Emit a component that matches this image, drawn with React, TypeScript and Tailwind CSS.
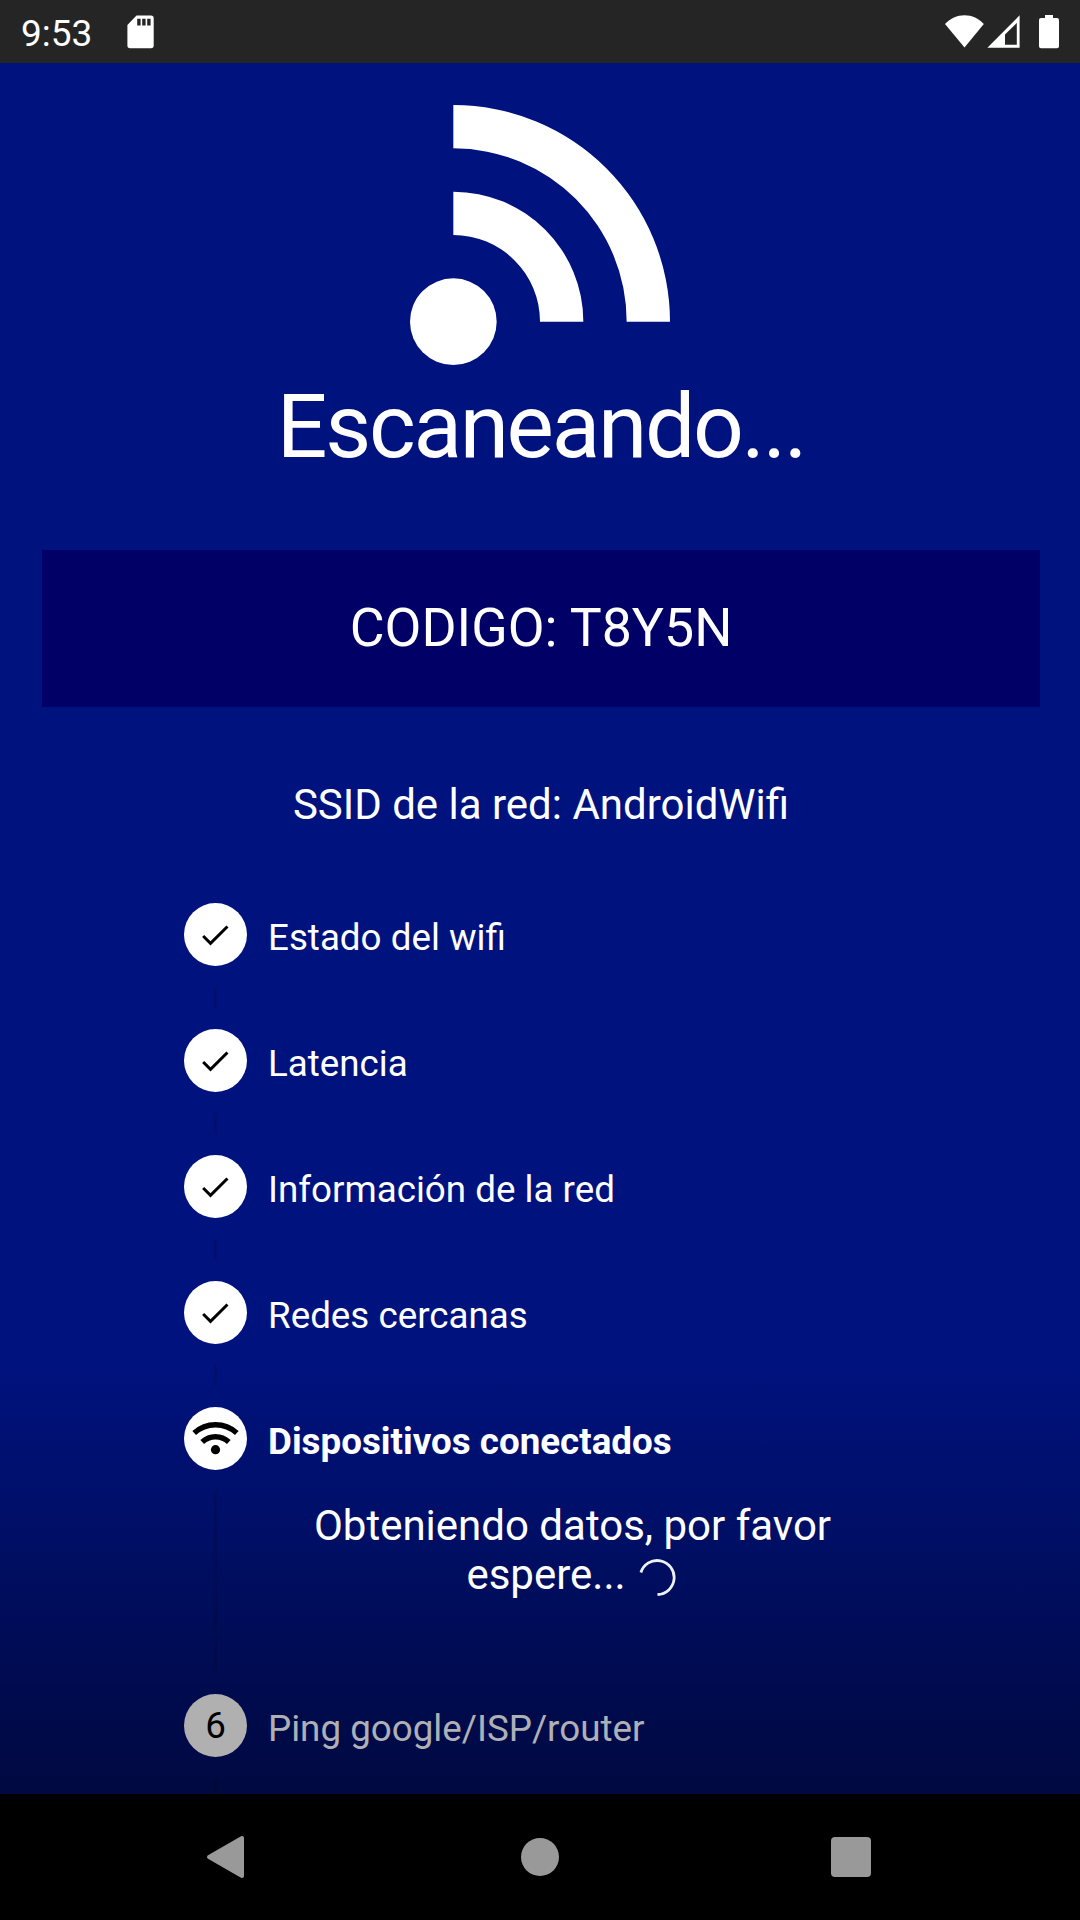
import type { ReactNode } from 'react';
import clsx from 'clsx';

type StepState = 'done' | 'active' | 'pending';

interface Step {
  title: string;
  state: StepState;
}

const steps: Step[] = [
  { title: 'Estado del wifi', state: 'done' },
  { title: 'Latencia', state: 'done' },
  { title: 'Información de la red', state: 'done' },
  { title: 'Redes cercanas', state: 'done' },
  { title: 'Dispositivos conectados', state: 'active' },
  { title: 'Ping google/ISP/router', state: 'pending' },
];

function StatusBar() {
  return (
    <header className="flex h-[63px] shrink-0 items-center bg-[#252525] pl-[21px] pr-[20px] text-white">
      <span className="w-[106px] pt-[3px] text-[37px] leading-none">9:53</span>
      <svg width="27" height="34" viewBox="0 0 27 34">
        <path
          fillRule="evenodd"
          fill="#fff"
          d="M9.5 0.5H24Q26.7 0.5 26.7 3.2V30.5Q26.7 33.3 24 33.3H3Q0.4 33.3 0.4 30.5V10ZM10.2 3.8V10.5H13.6V3.8ZM15.2 3.8V10.5H18.6V3.8ZM20.2 3.8V10.5H23.6V3.8Z"
        />
      </svg>
      <div className="ml-auto flex items-center">
        <svg width="40" height="34" viewBox="0 0 40 34">
          <path fill="#fff" d="M19.5 32.5L0 9C5.5 3.4 12 .2 19.5 .2S33.5 3.4 38.8 9Z" />
        </svg>
        <svg className="ml-[2px]" width="34" height="34" viewBox="0 0 34 34">
          <path fillRule="evenodd" fill="#fff" d="M0.4 32.8L32.6 0.3V32.8ZM18 29.8H29.8V8L18 19.5Z" />
        </svg>
        <svg className="ml-[18px]" width="21" height="34" viewBox="0 0 21 34">
          <path
            fill="#fff"
            d="M6 0H14V3H18Q20 3 20 5V31.2Q20 33.2 18 33.2H2Q0 33.2 0 31.2V5Q0 3 2 3H6Z"
          />
        </svg>
      </div>
    </header>
  );
}

function ScanLogo() {
  return (
    <svg className="ml-[368px] block shrink-0" width="260" height="260" viewBox="0 0 6 6" fill="#fff">
      <circle cx="1" cy="5" r="1" />
      <path d="M1 2A3 3 0 0 1 4 5H3A2 2 0 0 0 1 3Z" />
      <path d="M1 0A5 5 0 0 1 6 5H5A4 4 0 0 0 1 1Z" />
    </svg>
  );
}

function DoneIcon() {
  return (
    <svg className="mr-px" width="36" height="36" viewBox="0 0 24 24">
      <path d="M9 16.2L4.8 12l-1.4 1.4L9 19 21 7l-1.4-1.4L9 16.2z" />
    </svg>
  );
}

function WifiIcon() {
  return (
    <svg width="63" height="63" viewBox="0 0 63 63" fill="none" stroke="#000" strokeWidth="5.4">
      <path d="M10.2 26A31.5 31.5 0 0 1 52.8 26" />
      <path d="M18.2 35A19.4 19.4 0 0 1 44.8 35" />
      <circle cx="31.5" cy="42.7" r="4.6" fill="#000" stroke="none" />
    </svg>
  );
}

function Spinner() {
  return (
    <svg className="ml-[13px] mr-[3px] inline-block align-[-7px]" width="37" height="37" viewBox="0 0 37 37">
      <path d="M1.9 13.5A17 17 0 1 1 18.5 35.5" fill="none" stroke="#eef0fa" strokeWidth="2.8" />
    </svg>
  );
}

function StepRow({ step, index, children }: { step: Step; index: number; children?: ReactNode }) {
  const last = index === steps.length - 1;

  return (
    <li className={clsx('flex', last && 'grow')}>
      <div className="flex w-[63px] shrink-0 flex-col items-center">
        <div
          className={clsx(
            'flex size-[63px] shrink-0 items-center justify-center rounded-full text-[36.75px] leading-none text-black',
            step.state === 'pending' ? 'bg-[#b0b0b0] pt-[2px]' : 'bg-white',
          )}
        >
          {step.state === 'done' && <DoneIcon />}
          {step.state === 'active' && <WifiIcon />}
          {step.state === 'pending' && index + 1}
        </div>
        {/* connector down to the next step */}
        <div className={clsx('mt-[21px] w-[3px] grow bg-black/10', !last && 'mb-[21px]')} />
      </div>
      <div className={clsx('ml-[21px]', step.state === 'done' && 'h-[126px]')}>
        <div
          className={clsx(
            'flex h-[70px] items-center text-[36.75px] leading-none',
            step.state === 'active' && 'font-bold',
            step.state === 'pending' ? 'text-[#aeb0b6]' : 'text-white',
          )}
        >
          {step.title}
        </div>
        {children}
      </div>
    </li>
  );
}

function NavBar() {
  return (
    <nav className="flex h-[126px] shrink-0 items-center bg-black pl-[206px]">
      <svg width="39" height="44" viewBox="0 0 39 44">
        <path
          d="M3 22L36 3V41Z"
          fill="#999"
          stroke="#999"
          strokeWidth="4"
          strokeLinejoin="round"
        />
      </svg>
      <div className="ml-[276px] size-[38px] rounded-full bg-[#999]" />
      <div className="ml-[272px] size-[40px] rounded-[4px] bg-[#999]" />
    </nav>
  );
}

export default function App() {
  return (
    <div className="flex h-[1920px] w-[1080px] flex-col overflow-hidden font-[Roboto,sans-serif] text-white">
      <StatusBar />

      <main className="flex min-h-0 grow flex-col overflow-hidden bg-[linear-gradient(to_bottom,#00127e_0px,#00127e_1300px,#000940_1731px)] pl-[42px] pr-[40px] pt-[42px]">
        <ScanLogo />
        <h1 className="mt-[9px] text-center text-[89.25px] leading-[105px] tracking-[-2.3px]">
          Escaneando...
        </h1>

        <div className="mt-[71px] flex h-[157px] shrink-0 items-center justify-center bg-[#000066] text-[53.6px]">
          CODIGO: T8Y5N
        </div>

        <p className="mt-[73px] text-center text-[42px] leading-[49px]">SSID de la red: AndroidWifi</p>

        <ol className="mt-[74px] flex min-h-0 grow flex-col pl-[142px]">
          {steps.map((step, i) => (
            <StepRow key={step.title} step={step} index={i}>
              {step.state === 'active' && (
                <div className="h-[217px] w-[609px] pt-[24px] text-center text-[42px] leading-[49px]">
                  Obteniendo datos, por favor espere...
                  <Spinner />
                </div>
              )}
            </StepRow>
          ))}
        </ol>
      </main>

      <NavBar />
    </div>
  );
}
